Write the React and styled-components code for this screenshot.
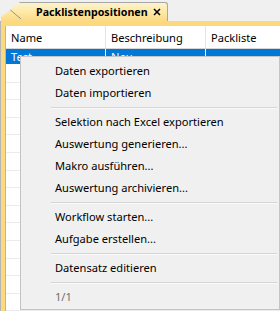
import React from 'react';
import styled, { createGlobalStyle } from 'styled-components';

const Global = createGlobalStyle`
  html, body { margin: 0; padding: 0; }
  body {
    width: 280px;
    height: 311px;
    overflow: hidden;
    background: #f0f0f0;
    font-family: "Noto Sans", "Liberation Sans", sans-serif;
    font-size: 11.1px;
    color: #000;
  }
`;

const Screen = styled.div`
  position: relative;
  width: 280px;
  height: 311px;
  display: flex;
  flex-direction: column;
`;

const TabStrip = styled.div`
  height: 19px;
  padding-top: 2px;
  padding-left: 1px;
  display: flex;
  flex-shrink: 0;
`;

const Tab = styled.div`
  position: relative;
  width: 167px;
  box-sizing: border-box;
  border-top: 1px solid #a7a7a7;
  border-right: 1px solid #a7a7a7;
  border-top-right-radius: 3px;
  background: linear-gradient(#fdf3cd, #fde6a0 60%, #fcd983);
  clip-path: polygon(0 15px, 19px 0, 100% 0, 100% 100%, 0 100%);
  display: flex;
  align-items: center;
  padding-left: 35px;
  font-weight: bold;
  font-size: 10.7px;

  &::before {
    content: '';
    position: absolute;
    left: 0;
    top: -1px;
    width: 20px;
    height: 17px;
    background: linear-gradient(to top right, transparent calc(50% - 0.7px), #8c8c8c 50%, transparent calc(50% + 0.7px));
  }
`;

const TabTitle = styled.span`
  flex: 1;
  line-height: 17px;
`;

const Close = styled.svg`
  width: 8px;
  height: 8px;
  margin-right: 6px;
`;

const Frame = styled.div`
  flex: 1;
  display: flex;
  background: #fcd97c;
  border-left: 1px solid #b5b5b5;
  padding: 5px 0 0 4px;
`;

const Grid = styled.div`
  flex: 1;
  background: #fff;
  border-left: 1px solid #d9b45a;
  overflow: hidden;
`;

const Row = styled.div`
  display: grid;
  grid-template-columns: 100px 100px 1fr;
  height: ${p => p.$h}px;
  box-sizing: border-box;
  border-bottom: 1px solid ${p => p.$line};
  background: ${p => p.$bg || '#fff'};
  color: ${p => p.$fg || '#000'};
`;

const Cell = styled.div`
  display: flex;
  align-items: center;
  padding-left: 5px;
  border-right: 1px solid ${p => p.$line};
  white-space: nowrap;
  overflow: hidden;
  &:last-child { border-right: none; }
`;

const Menu = styled.div`
  position: absolute;
  left: 20px;
  top: 56px;
  width: 260px;
  height: 254px;
  box-sizing: border-box;
  background: #f0f0f0;
  border: 1px solid #c4c4c4;
  padding: 3px 0 1px;
  display: flex;
  flex-direction: column;
`;

const Item = styled.div`
  height: 22px;
  box-sizing: border-box;
  padding-bottom: 2px;
  flex-shrink: 0;
  display: flex;
  align-items: center;
  padding-left: 34px;
  color: ${p => (p.$disabled ? '#6d6d6d' : '#000')};
  white-space: nowrap;
`;

const Separator = styled.div`
  height: 7px;
  flex-shrink: 0;
  display: flex;
  align-items: center;
  padding-left: 30px;
  padding-right: 2px;

  &::after {
    content: '';
    flex: 1;
    height: 1px;
    background: #d5d5d5;
    box-shadow: 0 1px 0 #fafafa;
  }
`;

const menu = [
  'Daten exportieren',
  'Daten importieren',
  '-',
  'Selektion nach Excel exportieren',
  'Auswertung generieren...',
  'Makro ausführen...',
  'Auswertung archivieren...',
  '-',
  'Workflow starten...',
  'Aufgabe erstellen...',
  '-',
  'Datensatz editieren',
  '-',
];

export default function App() {
  const empty = Array.from({ length: 14 });
  return (
    <Screen>
      <Global />
      <TabStrip>
        <Tab>
          <TabTitle>Packlistenpositionen</TabTitle>
          <Close viewBox="0 0 8 8">
            <path d="M1 1L7 7M7 1L1 7" stroke="#000" strokeWidth="1.5" />
          </Close>
        </Tab>
      </TabStrip>
      <Frame>
        <Grid>
          <Row $h={23} $line="#d6d6d6">
            <Cell $line="#e5e5e5">Name</Cell>
            <Cell $line="#e5e5e5">Beschreibung</Cell>
            <Cell $line="#e5e5e5">Packliste</Cell>
          </Row>
          <Row $h={16} $line="#fff" $bg="#0078d7" $fg="#fff">
            <Cell $line="#fff">Test</Cell>
            <Cell $line="#fff">Neu</Cell>
            <Cell $line="#fff"></Cell>
          </Row>
          {empty.map((_, i) => (
            <Row key={i} $h={17.6} $line="#ececec">
              <Cell $line="#ececec" />
              <Cell $line="#ececec" />
              <Cell $line="#ececec" />
            </Row>
          ))}
        </Grid>
      </Frame>
      <Menu>
        {menu.map((m, i) => (m === '-' ? <Separator key={i} /> : <Item key={i}>{m}</Item>))}
        <Item $disabled>1/1</Item>
      </Menu>
    </Screen>
  );
}
